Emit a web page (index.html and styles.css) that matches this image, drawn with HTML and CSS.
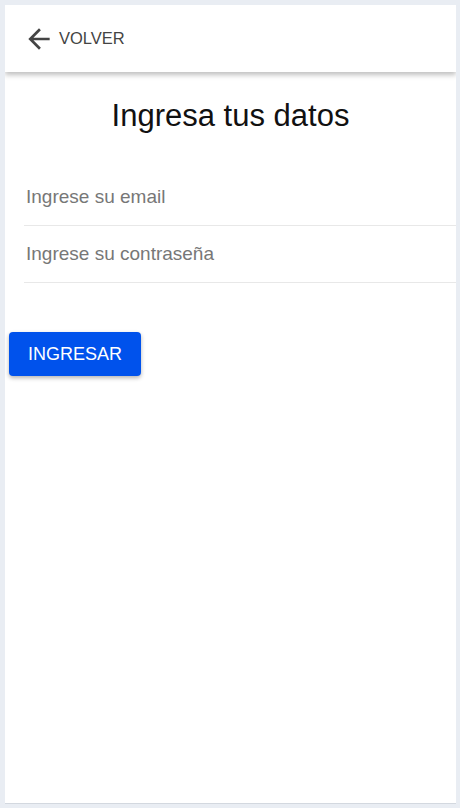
FILE: index.html
```html
<!DOCTYPE html>
<html lang="es">
<head>
    <meta charset="UTF-8">
    <meta name="viewport" content="width=device-width, initial-scale=1.0">
    <title>Ingresar</title>
    <link rel="stylesheet" href="styles.css">
</head>
<body>

<div class="page">
    <!-- Top bar -->
    <header class="topbar">
        <button class="back-btn">
            <svg class="back-icon" viewBox="0 0 24 24" width="24" height="24">
                <path d="M20 11H7.83l5.59-5.59L12 4l-8 8 8 8 1.41-1.41L7.83 13H20v-2z" fill="#444"/>
            </svg>
            <span>VOLVER</span>
        </button>
    </header>

    <h1 class="title">Ingresa tus datos</h1>

    <form class="login-form">
        <div class="field">
            <input type="email" placeholder="Ingrese su email">
        </div>
        <div class="field">
            <input type="password" placeholder="Ingrese su contraseña">
        </div>
        <button type="button" class="btn">INGRESAR</button>
    </form>
</div>

</body>
</html>
```

FILE: styles.css
```css
body {
    font-family: "Liberation Sans", Arial, sans-serif;
    background-color: #e9edf3;
    margin: 0;
    padding: 5px 4px 4px 5px;
}
.page {
    background-color: #fff;
    height: 799px;
    box-sizing: border-box;
    border-bottom: 1px solid #d3d8df;
    overflow: hidden;
}
.topbar {
    height: 67px;
    display: flex;
    align-items: center;
    padding-left: 18px;
    box-shadow: 0 3px 5px rgba(0, 0, 0, 0.25);
    position: relative;
}
.back-btn {
    display: flex;
    align-items: center;
    gap: 4px;
    background: none;
    border: none;
    padding: 0;
    font-family: inherit;
    font-size: 16.5px;
    color: #444;
    cursor: pointer;
}
.back-icon {
    width: 32px;
    height: 32px;
}
.title {
    margin: 26px 0 0;
    text-align: center;
    font-size: 31px;
    font-weight: normal;
    color: #111;
}
.login-form {
    margin-top: 35px;
}
.field {
    margin-left: 19px;
    border-bottom: 1px solid #e8e8e8;
}
.field input {
    width: 100%;
    box-sizing: border-box;
    border: none;
    outline: none;
    height: 56px;
    padding: 0 2px;
    font-family: inherit;
    font-size: 19px;
    color: #333;
    background: transparent;
}
.field input::placeholder {
    color: #777;
}
.btn {
    margin: 49px 0 0 4px;
    width: 132px;
    height: 44px;
    background-color: #0052ec;
    color: #fff;
    border: none;
    border-radius: 4px;
    font-family: inherit;
    font-size: 18px;
    box-shadow: 0 2px 4px rgba(0, 0, 0, 0.3);
    cursor: pointer;
}
```
